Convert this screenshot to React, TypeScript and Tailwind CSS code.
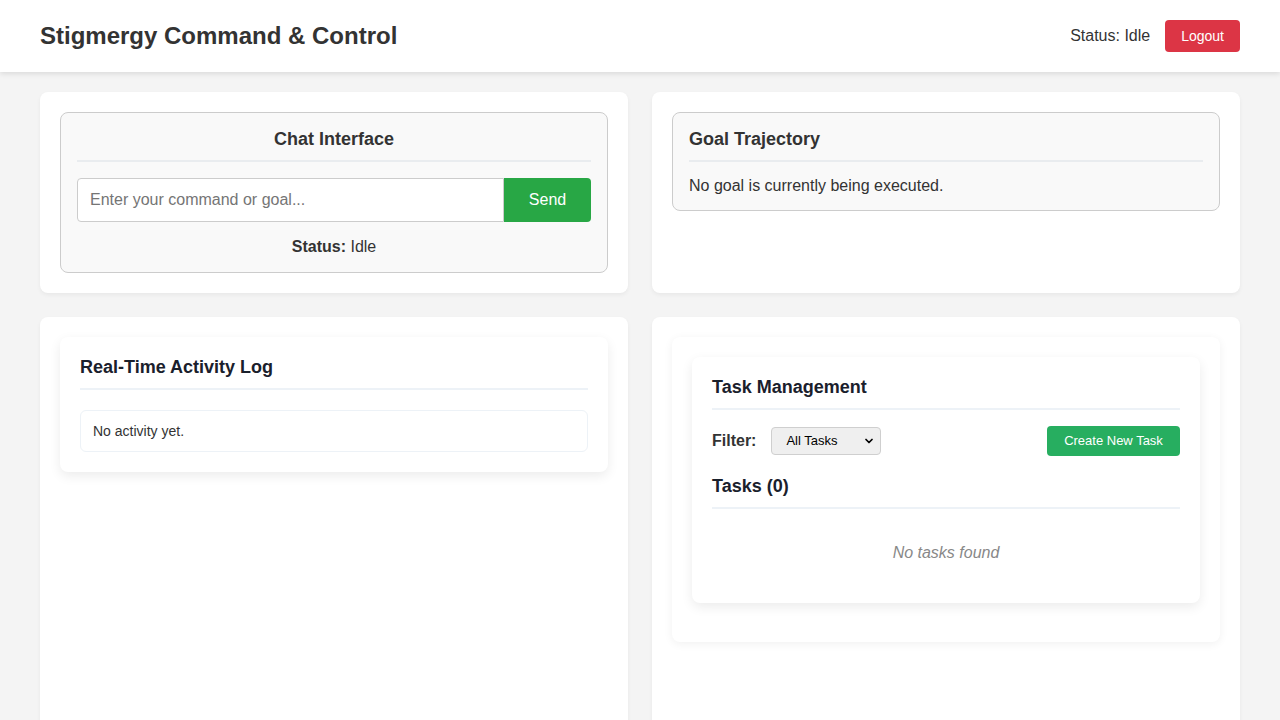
import { ChevronDown } from "lucide-react";

function Header() {
  return (
    <header className="h-[72px] bg-white px-10 flex items-center justify-between shadow-[0_2px_5px_rgba(0,0,0,0.1)] relative z-10">
      <h1 className="text-2xl font-bold text-[#333]">Stigmergy Command &amp; Control</h1>
      <div className="flex items-center gap-[15px]">
        <span className="text-base text-[#333]">Status: Idle</span>
        <button className="h-8 px-4 rounded bg-[#dc3545] text-white text-sm">Logout</button>
      </div>
    </header>
  );
}

function ChatInterface() {
  return (
    <div className="bg-[#f9f9f9] border border-[#ccc] rounded-lg p-4 pb-[15px]">
      <h2 className="text-lg font-bold text-[#333] text-center leading-[21px] pb-[10px] border-b-2 border-[#e9ecef]">
        Chat Interface
      </h2>
      <div className="flex mt-4">
        <input
          className="flex-1 h-11 px-3 text-base bg-white border border-[#ccc] rounded-l outline-none placeholder:text-[#757575]"
          placeholder="Enter your command or goal..."
        />
        <button className="h-11 w-[87px] bg-[#28a745] text-white text-base rounded-r">Send</button>
      </div>
      <p className="mt-[15px] text-center text-base leading-5 text-[#333]">
        <strong>Status:</strong> Idle
      </p>
    </div>
  );
}

function GoalTrajectory() {
  return (
    <div className="bg-[#f9f9f9] border border-[#ccc] rounded-lg p-4 pb-[15px]">
      <h2 className="text-lg font-bold text-[#333] leading-[21px] pb-[10px] border-b-2 border-[#e9ecef]">
        Goal Trajectory
      </h2>
      <p className="mt-[15px] text-base leading-[18px] text-[#333]">No goal is currently being executed.</p>
    </div>
  );
}

function ActivityLog() {
  return (
    <div className="bg-white rounded-lg p-5 shadow-[0_4px_12px_rgba(0,0,0,0.08)]">
      <h3 className="text-lg font-bold text-[#1a202c] leading-[21px] pb-[10px] border-b-2 border-[#edf2f7]">
        Real-Time Activity Log
      </h3>
      <div className="mt-5 border border-[#edf2f7] rounded-md p-3 text-sm leading-4 text-[#333]">
        No activity yet.
      </div>
    </div>
  );
}

function TaskManagement() {
  return (
    <div className="bg-white rounded-lg p-5 pb-[39px] shadow-[0_2px_10px_rgba(0,0,0,0.06)]">
      <div className="bg-white rounded-lg p-5 shadow-[0_4px_12px_rgba(0,0,0,0.08)]">
        <h3 className="text-lg font-bold text-[#1a202c] leading-[21px] pb-[10px] border-b-2 border-[#edf2f7]">
          Task Management
        </h3>
        <div className="mt-4 flex items-center justify-between h-[30px]">
          <div className="flex items-center gap-[15px]">
            <label className="text-base font-bold text-[#333]">Filter:</label>
            <div className="relative">
              <select className="appearance-none w-[110px] h-7 pl-[14px] pr-6 text-[13px] text-black bg-[#efefef] border border-[#cfcfcf] rounded outline-none">
                <option>All Tasks</option>
                <option>Pending</option>
                <option>In Progress</option>
                <option>Completed</option>
              </select>
              <ChevronDown
                size={12}
                strokeWidth={3.5}
                className="absolute right-[6px] top-1/2 -translate-y-1/2 text-black pointer-events-none"
              />
            </div>
          </div>
          <button className="h-[30px] w-[133px] rounded bg-[#27ae60] text-white text-[13px]">Create New Task</button>
        </div>
        <h4 className="mt-5 text-lg font-bold text-[#1a202c] leading-[21px] pb-[10px] border-b-2 border-[#edf2f7]">
          Tasks (0)
        </h4>
        <p className="pt-[34px] pb-[20px] text-center italic text-base leading-5 text-[#888]">No tasks found</p>
      </div>
    </div>
  );
}

export default function App() {
  return (
    <div className="min-h-screen bg-[#f4f4f4] text-[#333] font-['Liberation_Sans',Arial,sans-serif]">
      <Header />
      <main className="px-10 pt-5 pb-10 grid grid-cols-2 gap-6">
        <section className="bg-white rounded-lg p-5 shadow-[0_2px_4px_rgba(0,0,0,0.05)]">
          <ChatInterface />
        </section>
        <section className="bg-white rounded-lg p-5 shadow-[0_2px_4px_rgba(0,0,0,0.05)]">
          <GoalTrajectory />
        </section>
        <section className="bg-white rounded-lg p-5 min-h-[460px] shadow-[0_2px_4px_rgba(0,0,0,0.05)]">
          <ActivityLog />
        </section>
        <section className="bg-white rounded-lg p-5 min-h-[460px] shadow-[0_2px_4px_rgba(0,0,0,0.05)]">
          <TaskManagement />
        </section>
      </main>
    </div>
  );
}
